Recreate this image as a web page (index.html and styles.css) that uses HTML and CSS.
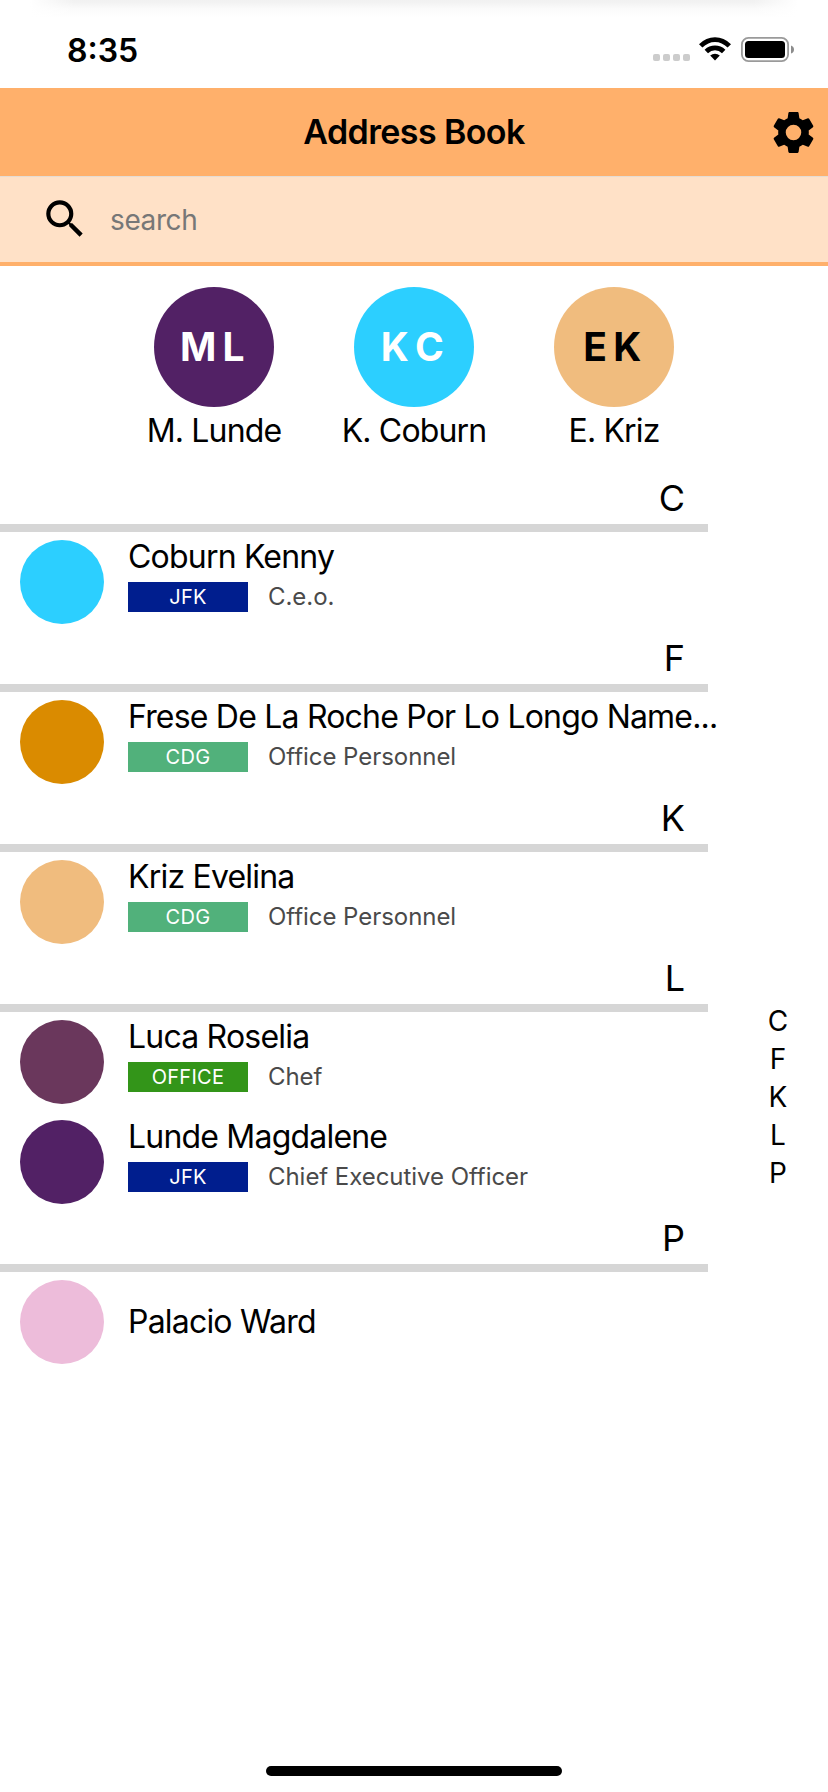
FILE: index.html
```html
<!DOCTYPE html>
<html lang="en">
<head>
<meta charset="utf-8">
<title>Address Book</title>
<link rel="stylesheet" href="styles.css">
</head>
<body>
<div class="screen">
  <div class="status">
    <span class="clock">8:35</span>
    <div class="status-icons">
      <span class="dots"><i></i><i></i><i></i><i></i></span>
      <svg class="wifi" viewBox="0 0 32 24" width="32" height="24">
        <path d="M0 7.2Q7 .2 16 .2T32 7.2L28.6 10.6Q23 5 16 5T3.400 10.600Z"/>
        <path d="M5.600 12.800Q10 8.600 16 8.600T26.400 12.800L23 16.200Q20 13.300 16 13.300T9 16.200Z"/>
        <path d="M11.200 18.500Q13.300 16.800 16 16.800T20.800 18.500L16 23.600Z"/>
      </svg>
      <svg class="battery" viewBox="0 0 53 25" width="53" height="25">
        <rect x=".9" y=".9" width="46.200" height="23.200" rx="6.500" fill="none" stroke="#9a9a9a" stroke-width="1.800"/>
        <rect x="4" y="4" width="40" height="17" rx="3.500"/>
        <path d="M50 8.500Q53 9.500 53 12.500T50 16.500Z" fill="#8c8c8c"/>
      </svg>
    </div>
  </div>
  <header class="header">
    <h1 class="title">Address Book</h1>
    <svg class="gear" viewBox="0 0 24 24" width="49" height="49"><path d="M19.430 12.980c.040-.320.070-.640.070-.980s-.030-.660-.070-.980l2.110-1.650c.190-.150.240-.420.120-.640l-2-3.460c-.120-.220-.390-.300-.610-.220l-2.490 1c-.520-.400-1.080-.730-1.690-.980l-.380-2.650C14.460 2.180 14.250 2 14 2h-4c-.250 0-.460.180-.490.420l-.380 2.650c-.610.250-1.170.590-1.690.980l-2.490-1c-.230-.090-.490 0-.610.220l-2 3.460c-.130.220-.070.490.120.640l2.110 1.650c-.040.320-.070.650-.070.980s.030.660.070.980l-2.110 1.650c-.190.150-.240.420-.120.640l2 3.460c.120.220.390.300.610.220l2.490-1c.520.400 1.080.730 1.690.980l.380 2.650c.030.240.240.420.490.420h4c.250 0 .460-.180.490-.420l.380-2.650c.610-.250 1.170-.590 1.690-.980l2.490 1c.230.090.490 0 .610-.220l2-3.460c.120-.220.070-.490-.120-.640l-2.110-1.650zM12 15.800a3.800 3.800 0 1 1 0-7.600 3.800 3.800 0 0 1 0 7.600z"/></svg>
  </header>
  <div class="search">
    <svg class="glass" viewBox="0 0 24 24" width="50" height="50"><path d="M15.500 14h-.790l-.280-.270A6.471 6.471 0 0 0 16 9.500 6.500 6.500 0 1 0 9.500 16c1.610 0 3.090-.590 4.230-1.570l.270.280v.790l5 4.990L20.490 19l-4.990-5zm-6 0C7.010 14 5 11.990 5 9.500S7.010 5 9.500 5 14 7.010 14 9.500 11.990 14 9.500 14z"/></svg>
    <span class="placeholder">search</span>
  </div>
  <div class="favorites">
    <div class="fav"><div class="disc plum">M L</div><span class="fav-name">M. Lunde</span></div>
    <div class="fav"><div class="disc sky">K C</div><span class="fav-name">K. Coburn</span></div>
    <div class="fav"><div class="disc sand">E K</div><span class="fav-name">E. Kriz</span></div>
  </div>
  <main class="main">
    <div class="list">
      <h2 class="section">C</h2>
      <div class="row"><span class="avatar sky"></span><div class="info"><div class="name">Coburn Kenny</div><div class="meta"><span class="badge jfk">JFK</span><span class="role">C.e.o.</span></div></div></div>
      <h2 class="section">F</h2>
      <div class="row"><span class="avatar amber"></span><div class="info"><div class="name">Frese De La Roche Por Lo Longo Name...</div><div class="meta"><span class="badge cdg">CDG</span><span class="role">Office Personnel</span></div></div></div>
      <h2 class="section">K</h2>
      <div class="row"><span class="avatar sand"></span><div class="info"><div class="name">Kriz Evelina</div><div class="meta"><span class="badge cdg">CDG</span><span class="role">Office Personnel</span></div></div></div>
      <h2 class="section">L</h2>
      <div class="row"><span class="avatar mauve"></span><div class="info"><div class="name">Luca Roselia</div><div class="meta"><span class="badge office">OFFICE</span><span class="role">Chef</span></div></div></div>
      <div class="row"><span class="avatar plum"></span><div class="info"><div class="name">Lunde Magdalene</div><div class="meta"><span class="badge jfk">JFK</span><span class="role">Chief Executive Officer</span></div></div></div>
      <h2 class="section">P</h2>
      <div class="row"><span class="avatar pink"></span><div class="info solo"><div class="name">Palacio Ward</div></div></div>
    </div>
    <nav class="index"><span>C</span><span>F</span><span>K</span><span>L</span><span>P</span></nav>
  </main>
  <footer class="footer"><div class="home-bar"></div></footer>
</div>
</body>
</html>
```
FILE: styles.css
```css
* { box-sizing: border-box; }
body { margin: 0; background: #fff; font-family: Inter, "Liberation Sans", sans-serif; color: #000; }
h1, h2 { margin: 0; font-weight: 400; }
svg { display: block; flex: none; }
.screen { width: 828px; height: 1792px; overflow: hidden; display: flex; flex-direction: column; background: #fff; }

.status { height: 88px; flex: none; display: flex; justify-content: space-between; align-items: flex-start; padding: 37px 34px 0 67px;
  background: linear-gradient(to right, #fff 30px, rgba(255,255,255,0) 75px, rgba(255,255,255,0) 753px, #fff 798px), linear-gradient(#f1f1f1 0, #f3f3f3 3px, #fafafa 8px, #fff 17px); }
.clock { font-size: 32px; line-height: 28px; font-weight: 600; }
.status-icons { display: flex; align-items: flex-start; }
.dots { display: flex; gap: 3px; margin: 17px 9px 0 0; }
.dots i { width: 7px; height: 7px; border-radius: 2px; background: #ccc; }
.wifi { margin-right: 10px; }

.header { height: 88px; flex: none; background: #ffb06b; display: grid; grid-template-columns: 1fr auto 1fr; align-items: center; padding: 0 10px; }
.title { grid-column: 2; font-size: 34px; line-height: 40px; font-weight: 600; letter-spacing: -.6px; white-space: nowrap; }
.gear { justify-self: end; }

.search { height: 90px; flex: none; display: flex; align-items: center; padding-left: 40px; background: #ffe1c7; border-top: 1px solid #e4dcd4; border-bottom: 4px solid #ffb06b; }
.glass { margin-top: -2px; }
.placeholder { margin-left: 20px; font-size: 28px; line-height: 34px; color: #777; letter-spacing: -.4px; }

.favorites { height: 206px; flex: none; display: flex; justify-content: center; padding-top: 21px; }
.fav { width: 200px; display: flex; flex-direction: column; align-items: center; }
.disc { width: 120px; height: 120px; padding: 0 4px 1px 0; border-radius: 50%; display: flex; align-items: center; justify-content: center; font-size: 39px; font-weight: 700; letter-spacing: -.5px; word-spacing: -2px; color: #fff; white-space: nowrap; }
.disc.sand { color: #000; }
.fav-name { margin-top: 4px; font-size: 32px; line-height: 40px; letter-spacing: -.85px; white-space: nowrap; }

.main { flex: 1; display: flex; justify-content: space-between; }
.list { width: 708px; }
.section { height: 60px; border-bottom: 8px solid #d6d6d6; padding-right: 23px; text-align: right; font-size: 36px; line-height: 52px; }
.row { height: 100px; display: flex; padding: 8px 0 0 20px; }
.avatar { width: 84px; height: 84px; flex: none; border-radius: 50%; margin-right: 24px; }
.info { margin-top: -3px; white-space: nowrap; }
.info.solo { margin-top: 22px; }
.name { font-size: 32px; line-height: 40px; letter-spacing: -.8px; }
.meta { display: flex; margin-top: 5px; }
.badge { width: 120px; height: 30px; margin-right: 20px; text-align: center; font-size: 20px; line-height: 31px; color: #fff; letter-spacing: .3px; }
.role { font-size: 24px; line-height: 30px; color: #4a4a4a; letter-spacing: -.05px; }
.index { width: 40px; margin: 530px 30px 0 0; display: flex; flex-direction: column; text-align: center; font-size: 28px; line-height: 38px; }

.sky { background: #2ccfff; }
.plum { background: #522165; }
.sand { background: #f0bc7e; }
.amber { background: #da8b00; }
.mauve { background: #6a375c; }
.pink { background: #edbcda; }
.jfk { background: #001e8e; }
.cdg { background: #51b17b; }
.office { background: #339519; }

.footer { flex: none; height: 26px; display: flex; justify-content: center; }
.home-bar { width: 296px; height: 10px; border-radius: 5px; background: #000; }
```
